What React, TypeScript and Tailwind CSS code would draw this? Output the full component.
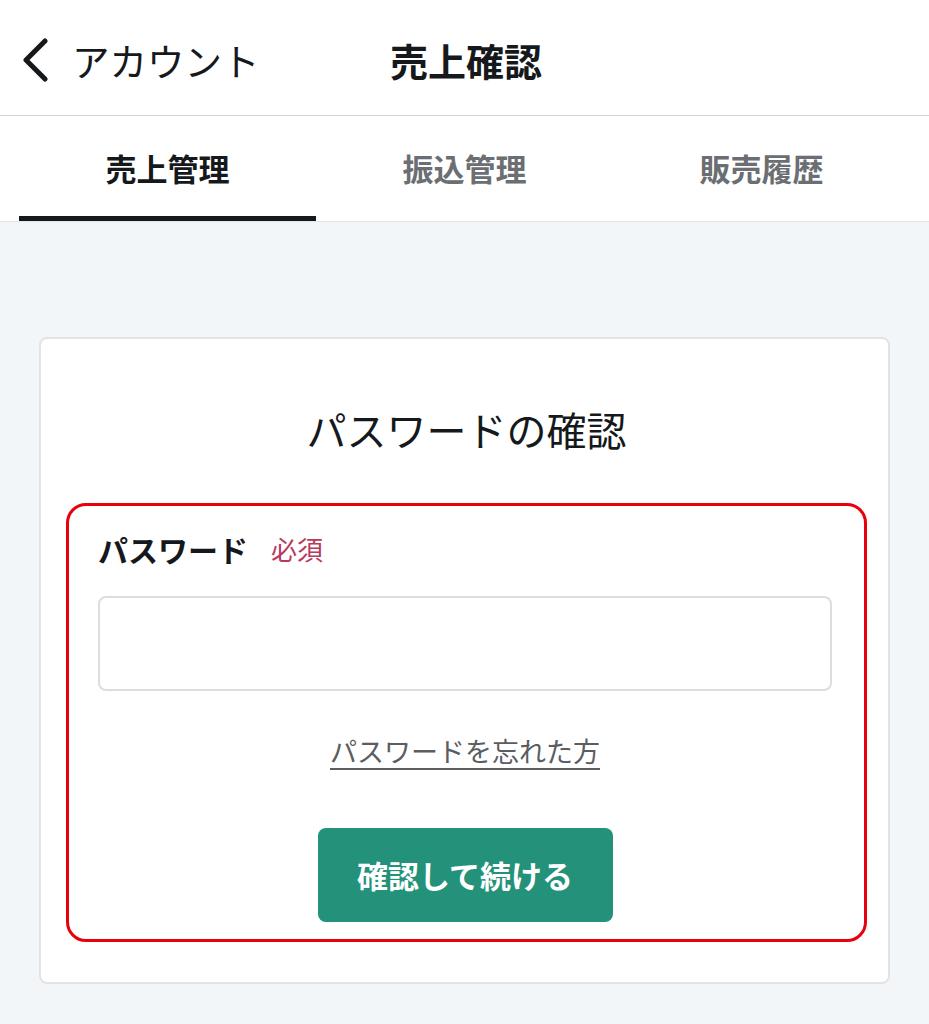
import React from 'react';

const tabs = ['売上管理', '振込管理', '販売履歴'];

const App: React.FC = () => {
    return (
        <div
            className="min-h-[1024px] bg-[#f3f6f9] text-[#16191c]"
            style={{ fontFamily: '"Noto Sans CJK JP", "Noto Sans", sans-serif' }}
        >
            {/* Header */}
            <div className="relative flex h-[116px] items-center bg-white border-b border-[#d4d4d4] pt-[4px]">
                <div className="flex items-center pl-[20px]">
                    <svg width="30" height="44" viewBox="0 0 30 44" fill="none">
                        <path d="M25 3 L6 22 L25 41" stroke="#16191c" strokeWidth="5" strokeLinecap="round" strokeLinejoin="round" />
                    </svg>
                    <span className="ml-[22px] text-[37.5px] leading-none">アカウント</span>
                </div>
                <h1 className="absolute left-[390px] text-[38px] font-bold leading-none">売上確認</h1>
            </div>

            {/* Tabs */}
            <div className="grid grid-cols-3 bg-white px-[19px] border-b border-[#e4e6e8]">
                {tabs.map((t, i) => (
                    <div
                        key={t}
                        className={
                            i === 0
                                ? 'flex h-[105px] items-center justify-center border-b-[5px] border-[#16191c] pt-[5px] text-[31px] font-bold text-[#16191c]'
                                : 'flex h-[105px] items-center justify-center border-b-[5px] border-transparent pt-[5px] text-[31px] font-bold text-[#6b6e72]'
                        }
                    >
                        {t}
                    </div>
                ))}
            </div>

            {/* Card */}
            <div className="px-[39px] pt-[115px] pb-[40px]">
                <div className="rounded-[8px] border-2 border-[#e1e3e5] bg-white pl-[25px] pr-[21px] pt-[70px] pb-[40px]">
                    <h2 className="text-center text-[40px] leading-none">パスワードの確認</h2>

                    <div className="mt-[54px] rounded-[20px] border-[3px] border-[#e8000b] pl-[29px] pr-[32px] pt-[28px] pb-[17px]">
                        <div className="flex items-center">
                            <span className="text-[30px] font-bold leading-none">パスワード</span>
                            <span className="ml-[23px] text-[26px] leading-none text-[#b8395c]">必須</span>
                        </div>
                        <input
                            type="password"
                            className="mt-[32px] block h-[95px] w-full rounded-[8px] border-2 border-[#dddddd] bg-white px-4 outline-none"
                        />
                        <div className="mt-[46px] text-center">
                            <a className="text-[27px] leading-none text-[#5a5d61] underline underline-offset-[6px]">
                                パスワードを忘れた方
                            </a>
                        </div>
                        <div className="mt-[61px] flex justify-center">
                            <button className="h-[94px] w-[295px] rounded-[8px] bg-[#24917a] text-[31px] font-bold text-white">
                                確認して続ける
                            </button>
                        </div>
                    </div>
                </div>
            </div>
        </div>
    );
};

export default App;
